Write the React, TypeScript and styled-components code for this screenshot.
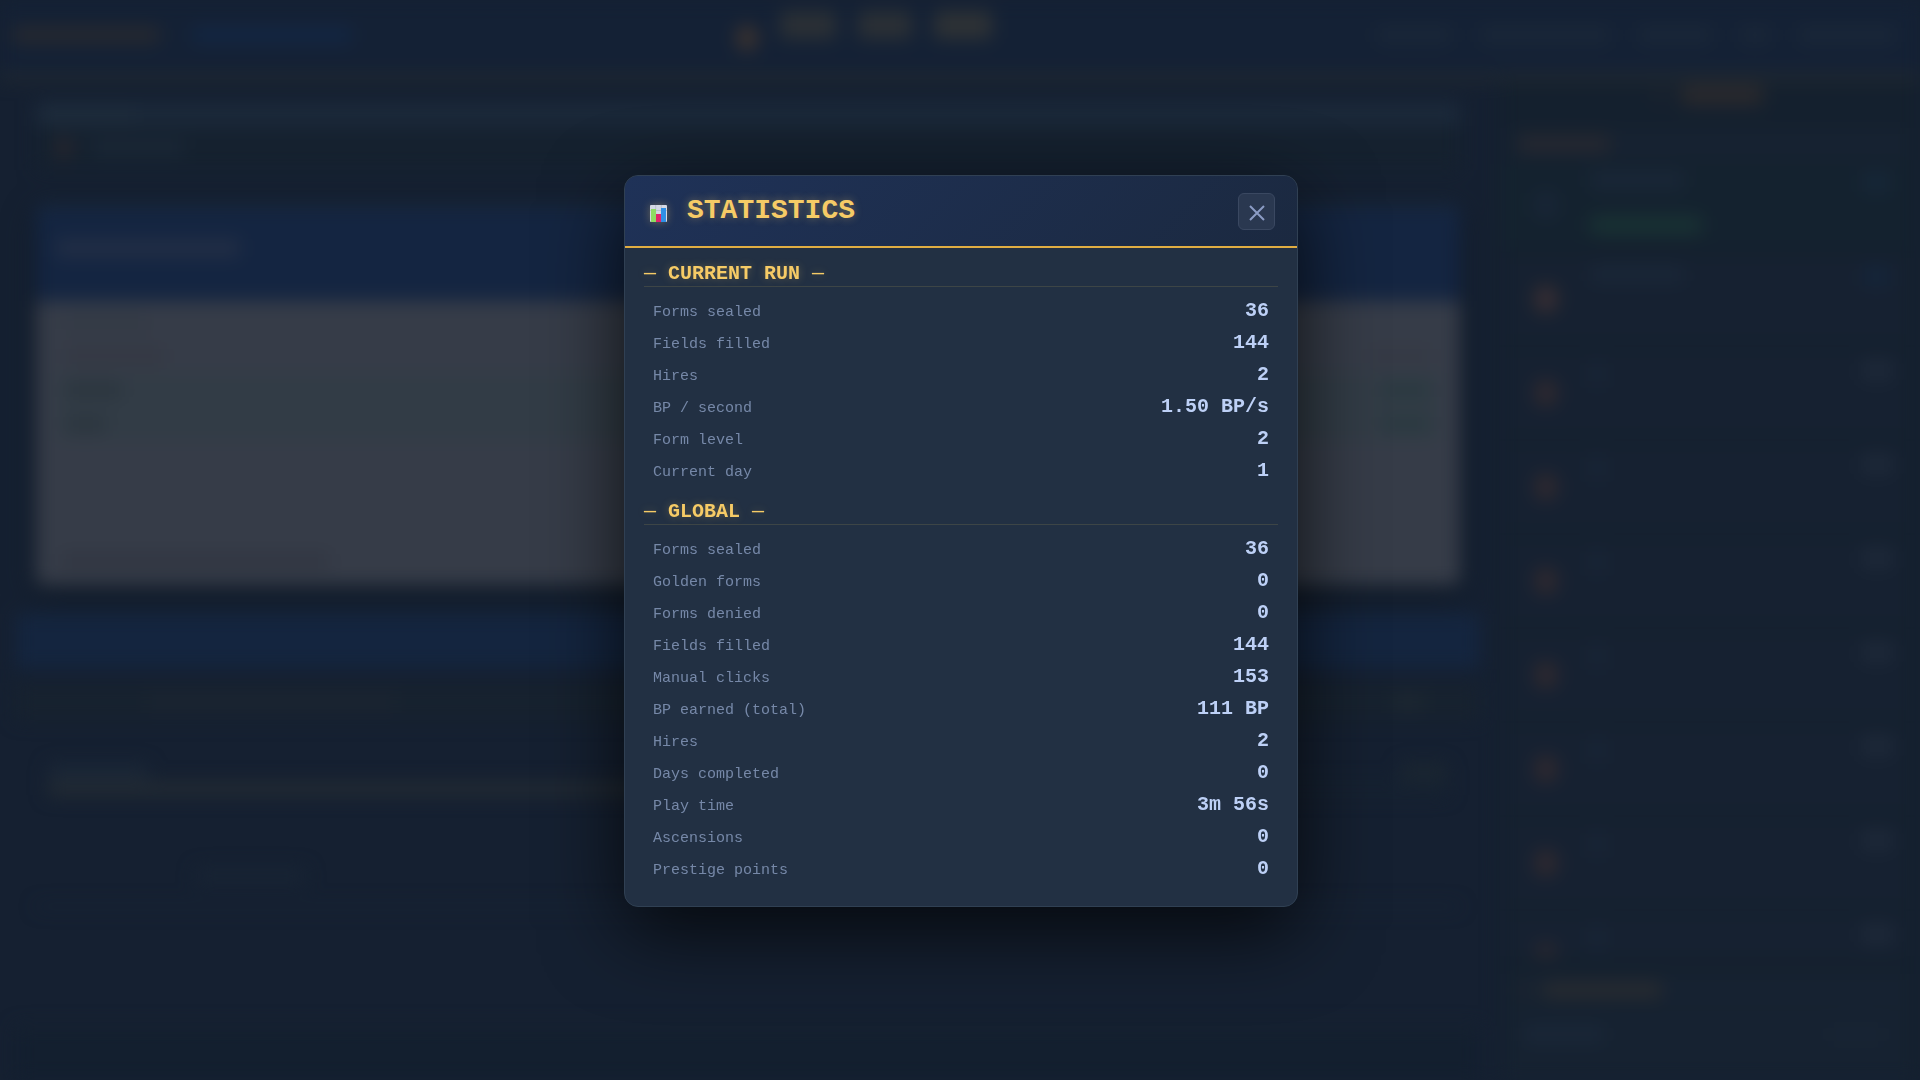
import React from "react";
import styled, { createGlobalStyle } from "styled-components";

const GlobalStyle = createGlobalStyle`
  *, *::before, *::after { box-sizing: border-box; }
  body {
    margin: 0;
    background: #152031;
    font-family: "Liberation Mono", "DejaVu Sans Mono", monospace;
    overflow: hidden;
  }
`;

/* ---------- Game screen behind the dialog ---------- */

const Scene = styled.div`
  height: 100vh;
  display: flex;
  flex-direction: column;
  overflow: hidden;
  filter: blur(9px);
`;

const TopBar = styled.header`
  flex: none;
  height: 80px;
  display: flex;
  align-items: center;
  justify-content: space-between;
  padding: 0 24px 4px 12px;
  background: #142135;
  border-bottom: 6px solid #262c30;
`;

const Group = styled.div<{ $gap: number }>`
  display: flex;
  align-items: center;
  gap: ${(p) => p.$gap}px;
`;

const Smudge = styled.span<{ $w: number; $h?: number; $c?: string }>`
  display: block;
  flex: none;
  width: ${(p) => p.$w}px;
  height: ${(p) => p.$h ?? 16}px;
  border-radius: 4px;
  background: ${(p) => p.$c ?? "#1a2738"};
`;

const Score = styled.div`
  display: flex;
  align-items: center;
  gap: 22px;
  padding-bottom: 20px;
`;

const Coin = styled.span`
  width: 22px;
  height: 26px;
  margin-top: 26px;
  border-radius: 50%;
  background: #3c332f;
`;

const Columns = styled.div`
  flex: 1;
  min-height: 0;
  display: flex;
`;

const Desk = styled.main`
  flex: 1;
  min-width: 0;
  display: flex;
  flex-direction: column;
  padding: 22px 20px 0 16px;
`;

const News = styled.section`
  flex: none;
  margin: 0 20px;
  height: 102px;
`;

const NewsTitle = styled.div`
  height: 24px;
  padding: 4px;
  background: #1b293a;
`;

const NewsItem = styled.div`
  display: flex;
  align-items: center;
  gap: 20px;
  height: 44px;
  padding-left: 20px;
  background: #15212f;
`;

const Sheet = styled.section`
  flex: none;
  margin: 0 20px;
  height: 381px;
  display: flex;
  flex-direction: column;
  border-radius: 8px;
  overflow: hidden;
  background: #363c48;
  box-shadow: 0 8px 24px #101a27;
`;

const SheetHead = styled.div`
  height: 97px;
  padding: 32px 20px;
  background: #142541;
  border-top: 3px solid #1e2c3a;
`;

const SheetRows = styled.div`
  flex: 1;
  padding: 4px 20px;
`;

const SheetRow = styled.div<{ $done?: boolean }>`
  display: flex;
  align-items: center;
  justify-content: space-between;
  height: 34px;
  padding: 0 10px;
  background: ${(p) => (p.$done ? "#323c46" : "transparent")};
`;

const SheetFoot = styled.div`
  height: 40px;
  padding: 8px 24px;
`;

const Stamp = styled.div`
  flex: none;
  height: 54px;
  margin-top: 29px;
  background: #14253f;
`;

const Note = styled.div`
  flex: none;
  display: flex;
  align-items: center;
  justify-content: space-between;
  height: 36px;
  margin-top: 16px;
  padding: 0 56px 0 130px;
  background: #17222f;
`;

const Progress = styled.div`
  flex: none;
  height: 104px;
  margin-top: 24px;
  padding: 20px 32px;
`;

const ProgressText = styled.div`
  display: flex;
  justify-content: space-between;
  height: 18px;
`;

const Track = styled.div`
  height: 14px;
  background: #162231;
`;

const Fill = styled.div`
  width: 55%;
  height: 100%;
  background: #232b33;
`;

const Hint = styled.div`
  flex: none;
  height: 60px;
  margin: 0 20px;
  padding: 20px 160px;
  border-bottom: 3px solid #182536;
`;

const Base = styled.div`
  flex: 1;
  margin-top: 118px;
  border-top: 3px solid #192531;
  background: #131f2f;
`;

const Shop = styled.aside`
  flex: none;
  width: 420px;
  display: flex;
  flex-direction: column;
  padding: 0 12px 0 8px;
  background: #14202e;
`;

const ShopTitle = styled.div`
  flex: none;
  display: flex;
  align-items: center;
  justify-content: center;
  gap: 16px;
  height: 30px;
`;

const ShopSection = styled.div`
  flex: none;
  display: flex;
  align-items: center;
  gap: 12px;
  height: 32px;
  margin: 18px 0 4px;
  padding-left: 10px;
  background: #162231;
`;

const ShopList = styled.div`
  flex: 1;
  min-height: 0;
  display: flex;
  flex-direction: column;
  gap: 12px;
  overflow: hidden;
`;

const Offer = styled.div<{ $owned?: boolean }>`
  flex: none;
  display: grid;
  grid-template-columns: 28px 1fr 30px;
  column-gap: 28px;
  height: 82px;
  padding: 8px 16px 8px 22px;
  background: ${(p) => (p.$owned ? "#14222f" : "#162131")};
  border-left: 4px solid ${(p) => (p.$owned ? "#162a31" : "#162131")};
`;

const OfferIcon = styled.span<{ $c: string }>`
  align-self: center;
  width: 24px;
  height: 28px;
  border-radius: 50%;
  background: ${(p) => p.$c};
`;

const OfferText = styled.div`
  display: flex;
  flex-direction: column;
  gap: 28px;
`;

const ShopFoot = styled.div`
  flex: none;
  height: 70px;
  display: flex;
  justify-content: space-between;
  padding: 16px 24px 0 16px;
  background: #162231;
`;

/* ---------- Dialog ---------- */

const Overlay = styled.div`
  position: fixed;
  inset: 0;
  display: grid;
  place-items: center;
  padding: 2px 0 0 2px;
`;

const Dialog = styled.section`
  width: min(674px, 92vw);
  border: 1px solid #304053;
  border-radius: 14px;
  overflow: hidden;
  background: #223043;
  box-shadow: 0 24px 80px rgba(0, 0, 0, 0.75);
`;

const DialogHead = styled.header`
  display: flex;
  align-items: center;
  gap: 20px;
  height: 72px;
  padding: 0 22px 0 25px;
  background: linear-gradient(135deg, #1f3258 0%, #1b2940 100%);
  border-bottom: 2px solid #e0ad42;
`;

const ChartIcon = styled.svg`
  flex: none;
  width: 17px;
  height: 17px;
  margin-top: 4px;
  filter: drop-shadow(0 0 4px rgba(244, 200, 96, 0.35));
`;

const Title = styled.h1`
  flex: 1;
  margin: 0;
  font-size: 28px;
  line-height: 32px;
  font-weight: 700;
  color: #f6cb66;
  text-shadow: 0 0 8px rgba(246, 203, 102, 0.4);
`;

const CloseButton = styled.button`
  display: grid;
  place-items: center;
  width: 37px;
  height: 37px;
  padding: 4px 0 0;
  border: 1px solid #3a4861;
  border-radius: 6px;
  background: #2a3850;
  color: #8b9cc5;
  cursor: pointer;
`;

const DialogBody = styled.div`
  padding: 1px 19px 21px;
`;

const SectionTitle = styled.h2`
  margin: 13px 0 8px;
  border-bottom: 1px solid #3d4546;
  font-size: 20px;
  line-height: 24px;
  font-weight: 700;
  color: #f6cb66;
  text-shadow: 0 0 8px rgba(246, 203, 102, 0.3);
`;

const Dash = styled.span`
  font-weight: 400;
`;

const StatList = styled.dl`
  margin: 0;
`;

const Stat = styled.div`
  display: flex;
  align-items: baseline;
  justify-content: space-between;
  height: 32px;
  padding: 0 9px;
  line-height: 32px;
`;

const StatLabel = styled.dt`
  font-size: 15px;
  color: #7688a8;
`;

const StatValue = styled.dd`
  margin: 0;
  font-size: 20px;
  font-weight: 700;
  color: #bdd0f6;
`;

type Entry = [string, string];

const currentRun: Entry[] = [
  ["Forms sealed", "36"],
  ["Fields filled", "144"],
  ["Hires", "2"],
  ["BP / second", "1.50 BP/s"],
  ["Form level", "2"],
  ["Current day", "1"],
];

const globalStats: Entry[] = [
  ["Forms sealed", "36"],
  ["Golden forms", "0"],
  ["Forms denied", "0"],
  ["Fields filled", "144"],
  ["Manual clicks", "153"],
  ["BP earned (total)", "111 BP"],
  ["Hires", "2"],
  ["Days completed", "0"],
  ["Play time", "3m 56s"],
  ["Ascensions", "0"],
  ["Prestige points", "0"],
];

function StatSection({ name, entries }: { name: string; entries: Entry[] }) {
  return (
    <>
      <SectionTitle>
        <Dash>—</Dash> {name} <Dash>—</Dash>
      </SectionTitle>
      <StatList>
        {entries.map(([label, value]) => (
          <Stat key={label}>
            <StatLabel>{label}</StatLabel>
            <StatValue>{value}</StatValue>
          </Stat>
        ))}
      </StatList>
    </>
  );
}

function GameScene() {
  return (
    <Scene aria-hidden="true">
      <TopBar>
        <Group $gap={32}>
          <Smudge $w={148} $c="#27292f" />
          <Smudge $w={160} $c="#132643" />
        </Group>
        <Score>
          <Coin />
          <Smudge $w={56} $h={28} $c="#2b3035" />
          <Smudge $w={54} $h={28} $c="#2b3035" />
          <Smudge $w={58} $h={28} $c="#2e3235" />
        </Score>
        <Group $gap={28}>
          <Smudge $w={76} />
          <Smudge $w={130} />
          <Smudge $w={74} />
          <Smudge $w={30} />
          <Smudge $w={98} />
        </Group>
      </TopBar>
      <Columns>
        <Desk>
          <News>
            <NewsTitle>
              <Smudge $w={96} $c="#1e2c3c" />
            </NewsTitle>
            <NewsItem>
              <Smudge $w={16} $h={20} $c="#28262e" />
              <Smudge $w={92} $c="#1a2736" />
            </NewsItem>
          </News>
          <Sheet>
            <SheetHead>
              <Smudge $w={184} $h={18} $c="#222e45" />
            </SheetHead>
            <SheetRows>
              <SheetRow>
                <Smudge $w={80} $c="#333a45" />
              </SheetRow>
              <SheetRow>
                <Smudge $w={98} $c="#343843" />
                <Smudge $w={60} $c="#353944" />
              </SheetRow>
              <SheetRow $done>
                <Smudge $w={56} $c="#2b353e" />
                <Smudge $w={48} $c="#2a3940" />
              </SheetRow>
              <SheetRow $done>
                <Smudge $w={40} $c="#2b353e" />
                <Smudge $w={48} $c="#2a3940" />
              </SheetRow>
            </SheetRows>
            <SheetFoot>
              <Smudge $w={270} $c="#313642" />
            </SheetFoot>
          </Sheet>
          <Stamp />
          <Note>
            <Smudge $w={250} $c="#1b2431" />
            <Smudge $w={32} $c="#1d2731" />
          </Note>
          <Progress>
            <ProgressText>
              <Smudge $w={100} $c="#1b2737" />
              <Smudge $w={48} $c="#1b2631" />
            </ProgressText>
            <Track>
              <Fill />
            </Track>
          </Progress>
          <Hint>
            <Smudge $w={110} $c="#182434" />
          </Hint>
          <Base />
        </Desk>
        <Shop>
          <ShopTitle>
            <Smudge $w={12} $c="#1c222e" />
            <Smudge $w={82} $h={20} $c="#2a292d" />
          </ShopTitle>
          <ShopSection>
            <Smudge $w={92} $c="#27282f" />
          </ShopSection>
          <ShopList>
            <Offer $owned>
              <OfferIcon $c="#192637" />
              <OfferText>
                <Smudge $w={94} />
                <Smudge $w={112} $h={18} $c="#193233" />
              </OfferText>
              <Smudge $w={28} $h={20} $c="#162738" />
            </Offer>
            <Offer>
              <OfferIcon $c="#382e32" />
              <OfferText>
                <Smudge $w={94} />
              </OfferText>
              <Smudge $w={28} $h={20} $c="#15253a" />
            </Offer>
            {[0, 1, 2, 3, 4, 5, 6].map((n) => (
              <Offer key={n}>
                <OfferIcon $c="#2f2930" />
                <OfferText>
                  <Smudge $w={14} $h={28} $c="#182536" />
                </OfferText>
                <Smudge $w={30} $h={20} $c="#1e2939" />
              </Offer>
            ))}
          </ShopList>
          <ShopSection>
            <Smudge $w={12} $c="#1d242e" />
            <Smudge $w={120} $c="#282b30" />
          </ShopSection>
          <ShopFoot>
            <Smudge $w={80} />
            <Smudge $w={56} $c="#182434" />
          </ShopFoot>
        </Shop>
      </Columns>
    </Scene>
  );
}

export default function App() {
  return (
    <>
      <GlobalStyle />
      <GameScene />
      <Overlay>
        <Dialog role="dialog" aria-modal="true" aria-labelledby="stats-title">
          <DialogHead>
            <ChartIcon viewBox="0 0 17 17" aria-hidden="true">
              <rect x="0" y="0" width="17" height="17" rx="1" fill="#d5d9e4" />
              <path d="M0 5.5H17M5.7 0V17M11.3 0V17" stroke="#bcc1d0" strokeWidth="1" />
              <rect x="1" y="4" width="5" height="13" fill="#8fdc62" />
              <rect x="6" y="9" width="5" height="8" fill="#e0246c" />
              <rect x="11" y="3" width="5" height="14" fill="#2f8fe6" />
            </ChartIcon>
            <Title id="stats-title">STATISTICS</Title>
            <CloseButton type="button" aria-label="Close">
              <svg width="16" height="16" viewBox="0 0 16 16" fill="none" aria-hidden="true">
                <path d="M1 1L15 15M15 1L1 15" stroke="currentColor" strokeWidth="2" />
              </svg>
            </CloseButton>
          </DialogHead>
          <DialogBody>
            <StatSection name="CURRENT RUN" entries={currentRun} />
            <StatSection name="GLOBAL" entries={globalStats} />
          </DialogBody>
        </Dialog>
      </Overlay>
    </>
  );
}
